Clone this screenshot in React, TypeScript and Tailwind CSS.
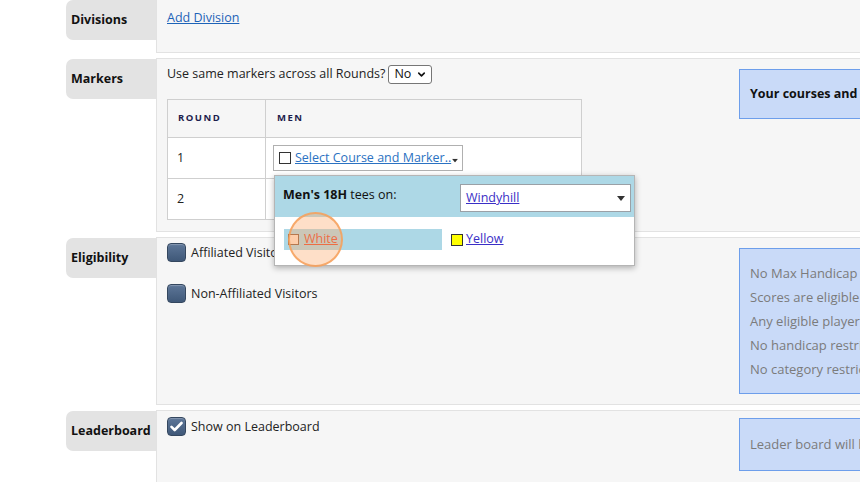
import React from 'react';
import { ChevronDown } from 'lucide-react';

// Small dark triangle used by the fake dropdowns
const Caret = ({ className = '' }: { className?: string }) => (
  <svg width="8" height="5" viewBox="0 0 8 5" className={className}>
    <path d="M0 0h8L4 5z" fill="#333" />
  </svg>
);

const FakeCheckbox = ({ checked = false }: { checked?: boolean }) => (
  <span className="inline-flex w-[19px] h-[19px] shrink-0 items-center justify-center rounded-[4px] border border-[#34475f] bg-gradient-to-b from-[#5d7698] to-[#3f5878] shadow-[inset_0_1px_1px_rgba(255,255,255,0.25)]">
    {checked && (
      <svg width="13" height="11" viewBox="0 0 13 11">
        <path d="M1.5 5.8l3.2 3.2L11.5 2" stroke="#fff" strokeWidth="2.6" fill="none" strokeLinecap="round" strokeLinejoin="round" />
      </svg>
    )}
  </span>
);

const Label = ({ children }: { children: React.ReactNode }) => (
  <div className="w-[90px] h-[40px] shrink-0 mt-[1px] flex items-center pl-[5px] bg-[#e3e3e3] rounded-l-[7px] font-bold text-[#111]">
    {children}
  </div>
);

const InfoBox = ({ children, className = '' }: { children: React.ReactNode; className?: string }) => (
  <div className={`w-[300px] shrink-0 whitespace-nowrap bg-[#c9daf8] border border-[#6d9eeb] pl-[10px] ${className}`}>{children}</div>
);

const MarkerPopup = () => (
  <div className="absolute top-[30px] left-[1px] w-[361px] h-[91px] z-10 bg-white border border-[#b5b5b5] shadow-[0_2px_6px_rgba(0,0,0,0.3)]">
    <div className="h-[41px] bg-[#add8e6] flex items-start pl-[8px] pt-[8px]">
      <div className="w-[177px] pt-[2px] text-[#111]">
        <span className="font-bold">Men's 18H</span> tees on:
      </div>
      <div className="w-[171px] h-[28px] bg-white border border-[#9aa0a6] flex items-center justify-between pl-[5px] pr-[5px]">
        <span className="text-[#3a2fc6] underline pt-[1px]">Windyhill</span>
        <Caret />
      </div>
    </div>
    <div className="flex items-center pt-[12px] pl-[9px]">
      <div className="w-[158px] h-[21px] bg-[#add8e6] flex items-center pl-[4px] gap-[5px]">
        <span className="w-[11px] h-[11px] border border-[#8a5a3c] bg-[#fde3cf]" />
        <span className="text-[#e4482a] underline">White</span>
      </div>
      <div className="flex items-center ml-[9px] gap-[3px]">
        <span className="w-[12px] h-[12px] border border-[#333] bg-[#ffff00]" />
        <span className="text-[#3a2fc6] underline">Yellow</span>
      </div>
    </div>
    {/* click indicator */}
    <div className="absolute left-[13px] top-[36px] w-[55px] h-[55px] rounded-full bg-[rgba(253,172,110,0.38)] border-2 border-[rgba(246,160,90,0.85)] z-20" />
  </div>
);

export default function App() {
  return (
    <div className="w-[860px] h-[482px] overflow-hidden bg-white font-['Open_Sans',sans-serif] text-[12.5px] text-[#222]">
      <div className="w-[1100px] pl-[66px] flex flex-col gap-[5px] -mt-[1px]">
        {/* Divisions */}
        <div className="flex">
          <Label>Divisions</Label>
          <div className="flex-1 h-[54px] bg-[#f6f6f6] border border-[#e2e2e2] pl-[10px] pt-[9px]">
            <span className="text-[#1d63b8] underline">Add Division</span>
          </div>
        </div>

        {/* Markers */}
        <div className="flex">
          <Label>Markers</Label>
          <div className="flex-1 h-[174px] bg-[#f6f6f6] border border-[#e2e2e2] flex">
            <div className="w-[582px] shrink-0 pl-[10px] pt-[6px]">
              <div className="flex items-center h-[19px]">
                <span>Use same markers across all Rounds?</span>
                <span className="ml-[3px] w-[44px] h-[19px] bg-white border border-[#767676] rounded-[3px] flex items-center justify-between pl-[5px] pr-[4px] text-[#111]">
                  No
                  <ChevronDown size={11} strokeWidth={3.5} color="#111" />
                </span>
              </div>
              <div className="mt-[15px] w-[415px] border border-[#cfcfcf] bg-white">
                <div className="grid grid-cols-[98px_1fr] h-[38px] bg-[#f6f6f6] border-b border-[#cfcfcf] text-[9.5px] font-bold tracking-[0.16em] text-[#1d1d4d]">
                  <div className="flex items-center pl-[10px] border-r border-[#cfcfcf]">ROUND</div>
                  <div className="flex items-center pl-[11px]">MEN</div>
                </div>
                <div className="grid grid-cols-[98px_1fr] h-[41px] border-b border-[#cfcfcf]">
                  <div className="flex items-center pl-[9px] border-r border-[#cfcfcf]">1</div>
                  <div className="flex items-center pl-[7px]">
                    <div className="relative">
                      <div className="w-[190px] h-[26px] bg-white border border-[#b0b0b0] flex items-center pl-[5px] gap-[4px] whitespace-nowrap">
                        <span className="w-[12px] h-[12px] shrink-0 border border-[#333] bg-white" />
                        <span className="text-[#2b72c2] underline">Select Course and Marker..</span>
                        <Caret className="-ml-[4px] mt-[4px] scale-75" />
                      </div>
                      <MarkerPopup />
                    </div>
                  </div>
                </div>
                <div className="grid grid-cols-[98px_1fr] h-[40px]">
                  <div className="flex items-center pl-[9px] border-r border-[#cfcfcf]">2</div>
                  <div />
                </div>
              </div>
            </div>
            <InfoBox className="mt-[10px] h-[50px] flex items-center font-bold text-[#111]">Your courses and markers</InfoBox>
          </div>
        </div>

        {/* Eligibility */}
        <div className="flex">
          <Label>Eligibility</Label>
          <div className="flex-1 h-[168px] bg-[#f6f6f6] border border-[#e2e2e2] flex">
            <div className="w-[582px] shrink-0 pl-[10px] pt-[5px] flex flex-col gap-[21px]">
              <label className="flex items-center gap-[5px]">
                <FakeCheckbox />
                <span className="pt-[1px]">Affiliated Visitors</span>
              </label>
              <label className="flex items-center gap-[5px]">
                <FakeCheckbox />
                <span className="pt-[1px]">Non-Affiliated Visitors</span>
              </label>
            </div>
            <InfoBox className="mt-[10px] h-[146px] pt-[12px] leading-[24px] text-[13px] text-[#7b7b7b]">
              <div>No Max Handicap</div>
              <div>Scores are eligible for handicap</div>
              <div>Any eligible player may enter</div>
              <div>No handicap restrictions</div>
              <div>No category restrictions</div>
            </InfoBox>
          </div>
        </div>

        {/* Leaderboard */}
        <div className="flex">
          <Label>Leaderboard</Label>
          <div className="flex-1 h-[90px] bg-[#f6f6f6] border border-[#e2e2e2] flex">
            <div className="w-[582px] shrink-0 pl-[10px] pt-[5px]">
              <label className="flex items-center gap-[5px]">
                <FakeCheckbox checked />
                <span className="pt-[2px]">Show on Leaderboard</span>
              </label>
            </div>
            <InfoBox className="mt-[7px] h-[53px] flex items-center text-[13px] text-[#7b7b7b]">Leader board will be shown</InfoBox>
          </div>
        </div>
      </div>
    </div>
  );
}
